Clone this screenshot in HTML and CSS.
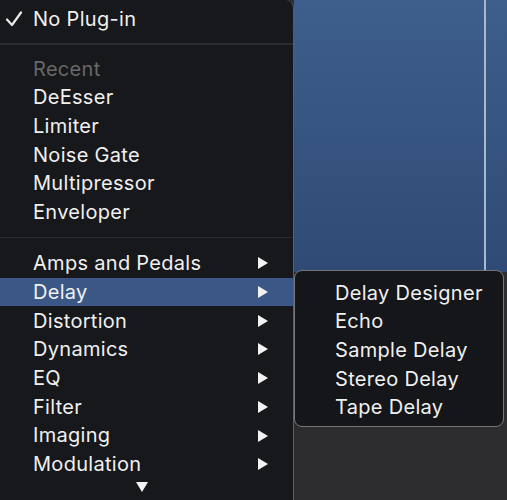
FILE: index.html
```html
<html lang="en">
<head>
  <meta charset="UTF-8">
  <meta name="viewport" content="width=device-width, initial-scale=1.0">
  <title>Plug-in Menu</title>
  <link rel="stylesheet" href="styles.css">
</head>
<body>
  <div class="stage">
    <div class="menu">
      <div class="item checked">
        <svg class="check" viewBox="0 0 18 16" width="18" height="16"><path d="M2 8.5 L7 14 L16 1.5" fill="none" stroke="#e9e9e9" stroke-width="2.2" stroke-linecap="round" stroke-linejoin="round"/></svg>
        <span>No Plug-in</span>
      </div>
      <div class="sep"></div>
      <div class="item header">Recent</div>
      <div class="item">DeEsser</div>
      <div class="item">Limiter</div>
      <div class="item">Noise Gate</div>
      <div class="item">Multipressor</div>
      <div class="item">Enveloper</div>
      <div class="sep wide"></div>
      <div class="item sub">Amps and Pedals</div>
      <div class="item sub active">Delay</div>
      <div class="item sub">Distortion</div>
      <div class="item sub">Dynamics</div>
      <div class="item sub">EQ</div>
      <div class="item sub">Filter</div>
      <div class="item sub">Imaging</div>
      <div class="item sub">Modulation</div>
      <div class="more"></div>
    </div>

    <div class="backdrop">
      <div class="panel">
        <div class="divider"></div>
      </div>
      <div class="floor"></div>
    </div>

    <div class="submenu">
      <div class="item">Delay Designer</div>
      <div class="item">Echo</div>
      <div class="item">Sample Delay</div>
      <div class="item">Stereo Delay</div>
      <div class="item">Tape Delay</div>
    </div>
  </div>
</body>
</html>
```

FILE: styles.css
```css
body {
  margin: 0;
  background: #2b2b2d;
  font-family: 'Inter', 'Liberation Sans', sans-serif;
  overflow: hidden;
}

.stage {
  position: relative;
  width: 507px;
  height: 500px;
  display: grid;
  grid-template-columns: 294px 1fr;
  overflow: hidden;
}

.menu {
  background: #17181b;
  border-right: 1.5px solid #5b5e64;
  border-top-right-radius: 8px;
  padding-top: 4.6px;
  color: #f0f0f0;
}

.item {
  height: 28.7px;
  display: flex;
  align-items: center;
  padding-left: 33px;
  font-size: 20px;
  letter-spacing: 0.3px;
  position: relative;
}

.item.checked .check {
  position: absolute;
  left: 5px;
  top: 6px;
}

.item.header {
  color: #686868;
}

.item.sub::after {
  content: '';
  position: absolute;
  left: 258px;
  top: 8.5px;
  border-left: 10.5px solid #f2f2f2;
  border-top: 6px solid transparent;
  border-bottom: 6px solid transparent;
}

.item.active {
  background: #3a5785;
}

.sep {
  height: 21px;
  display: flex;
  align-items: center;
}

.sep.wide {
  height: 22.5px;
}

.sep::before {
  content: '';
  flex: 1;
  height: 1.5px;
  background: #2c2d31;
}

.more {
  width: 0;
  margin: 4px 0 0 136px;
  border-top: 10px solid #f2f2f2;
  border-left: 6.5px solid transparent;
  border-right: 6.5px solid transparent;
}

.backdrop {
  display: flex;
  flex-direction: column;
}

.panel {
  height: 272px;
  background: linear-gradient(to bottom, #3e5e8b, #2f4b75);
  position: relative;
}

.divider {
  position: absolute;
  left: 190px;
  top: 0;
  bottom: 0;
  width: 1.5px;
  background: #aab8cf;
}

.floor {
  flex: 1;
  background: #2d2d2f;
}

.submenu {
  position: absolute;
  left: 294px;
  top: 270px;
  width: 210px;
  padding: 7.2px 0 5.6px;
  background: #151619;
  border: 1.5px solid #75777c;
  border-radius: 8px;
  color: #f0f0f0;
  box-sizing: border-box;
  height: 157px;
}

.submenu .item {
  padding-left: 40px;
}
```
